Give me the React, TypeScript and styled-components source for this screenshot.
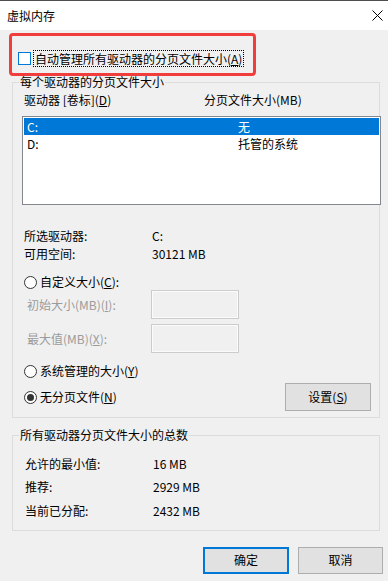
import styled, { createGlobalStyle } from "styled-components";

const GlobalStyle = createGlobalStyle`
  html, body {
    margin: 0;
    padding: 0;
    background: #f0f0f0;
  }
  body {
    font-family: "Noto Sans CJK SC", "Microsoft YaHei", sans-serif;
    font-size: 12px;
    color: #000;
  }
`;

const Window = styled.div`
  width: 388px;
  height: 581px;
  background: #f0f0f0;
  display: flex;
  flex-direction: column;
  overflow: hidden;
`;

const TitleBar = styled.div`
  height: 29px;
  border-top: 1px solid #4d4d4d;
  background: #fff;
  display: flex;
  align-items: center;
  justify-content: space-between;
  padding: 0 5px 0 7px;
  flex-shrink: 0;
`;

const Title = styled.span`
  font-size: 12px;
  line-height: 16px;
`;

/* red annotation frame around the auto-manage checkbox */
const Highlight = styled.div`
  box-sizing: border-box;
  margin: 3px 0 0 9px;
  width: 247px;
  height: 43px;
  border: 3px solid #f23d3d;
  border-radius: 4px;
  padding: 14px 0 0 6px;
`;

const CheckRow = styled.div`
  display: flex;
  align-items: center;
  height: 17px;
`;

const CheckBox = styled.span`
  box-sizing: border-box;
  width: 13px;
  height: 13px;
  border: 1px solid #0078d7;
  background: #fff;
  margin-right: 2px;
`;

const FocusLabel = styled.span`
  box-sizing: border-box;
  height: 17px;
  line-height: 15px;
  border: 1px dotted #000;
  padding: 0 1px;
`;

const Group = styled.fieldset<{ $top: number }>`
  margin: ${(p) => p.$top}px 8px 0 12px;
  padding: 0 0 ${(p) => (p.$top < 0 ? 6 : 7)}px 0;
  border: 1px solid #dcdcdc;
  min-width: 0;
`;

const Legend = styled.legend`
  margin-left: 6px;
  padding: 0 1px;
  line-height: 16px;
`;

const ColumnHeader = styled.div`
  display: grid;
  grid-template-columns: 180px 1fr;
  margin-top: 2px;
  padding-left: 11px;
  line-height: 16px;
`;

const ListBox = styled.div`
  box-sizing: border-box;
  margin: 8px 0 0 9px;
  width: 359px;
  height: 89px;
  border: 1px solid #828790;
  background: #fff;
  padding: 1px;
`;

const ListRow = styled.div<{ $selected?: boolean }>`
  display: grid;
  grid-template-columns: 211px 1fr;
  height: 17px;
  line-height: 17px;
  padding-left: 3px;
  background: ${(p) => (p.$selected ? "#0078d7" : "transparent")};
  color: ${(p) => (p.$selected ? "#fff" : "#000")};
`;

const InfoBlock = styled.div<{ $top: number; $row: number }>`
  margin-top: ${(p) => p.$top}px;
  display: grid;
  grid-auto-rows: ${(p) => p.$row}px;
  align-items: center;
`;

const InfoRow = styled.div<{ $pad: number }>`
  display: grid;
  grid-template-columns: 128px 1fr;
  padding-left: ${(p) => p.$pad}px;
  line-height: 16px;
`;

const RadioRow = styled.label<{ $top: number }>`
  display: flex;
  align-items: center;
  height: 16px;
  margin-top: ${(p) => p.$top}px;
  padding-left: 11px;
  gap: 3px;
  line-height: 16px;
`;

const Radio = styled.span<{ $checked?: boolean }>`
  box-sizing: border-box;
  width: 13px;
  height: 13px;
  border-radius: 50%;
  border: 1px solid #333;
  background: #fff;
  display: flex;
  align-items: center;
  justify-content: center;
  &::after {
    content: "";
    width: 7px;
    height: 7px;
    border-radius: 50%;
    background: ${(p) => (p.$checked ? "#333" : "transparent")};
  }
`;

const SizeGrid = styled.div`
  display: grid;
  grid-auto-rows: 29px;
  row-gap: 5px;
`;

const SizeRow = styled.div`
  display: grid;
  grid-template-columns: 124px 88px;
  padding-left: 14px;
  align-items: center;
  color: #9b9b9b;
  line-height: 16px;
`;

const DisabledInput = styled.div`
  box-sizing: border-box;
  height: 29px;
  border: 1px solid #cccccc;
  box-shadow: inset 0 0 0 1px #fbfbfb;
  background: #f0f0f0;
`;

const BottomRow = styled.div`
  display: flex;
  align-items: center;
  justify-content: space-between;
  margin-top: 4px;
  height: 28px;
  padding-right: 8px;
  & > label {
    margin-top: 0;
  }
`;

const Button = styled.button<{ $default?: boolean; $w: number; $h: number }>`
  box-sizing: border-box;
  width: ${(p) => p.$w}px;
  height: ${(p) => p.$h}px;
  background: #e1e1e1;
  border: ${(p) => (p.$default ? "2px solid #0078d7" : "1px solid #adadad")};
  font-family: inherit;
  font-size: 12px;
  color: #000;
  padding: 0;
  line-height: 16px;
`;

const Footer = styled.div`
  display: flex;
  justify-content: flex-end;
  gap: 9px;
  margin-top: 16px;
  padding-right: 5px;
`;

const CloseIcon = () => (
  <svg width="11" height="11" viewBox="0 0 11 11">
    <path d="M0.5 0.5 L10.5 10.5 M10.5 0.5 L0.5 10.5" stroke="#000" strokeWidth="1" />
  </svg>
);

const drives = [
  { name: "C:", size: "无", selected: true },
  { name: "D:", size: "托管的系统", selected: false },
];

const totals = [
  { label: "允许的最小值:", value: "16 MB" },
  { label: "推荐:", value: "2929 MB" },
  { label: "当前已分配:", value: "2432 MB" },
];

export default function App() {
  return (
    <Window>
      <GlobalStyle />
      <TitleBar>
        <Title>虚拟内存</Title>
        <CloseIcon />
      </TitleBar>

      <Highlight>
        <CheckRow>
          <CheckBox />
          <FocusLabel>
            自动管理所有驱动器的分页文件大小(<u>A</u>)
          </FocusLabel>
        </CheckRow>
      </Highlight>

      <Group $top={-2}>
        <Legend>每个驱动器的分页文件大小</Legend>
        <ColumnHeader>
          <span>
            驱动器 [卷标](<u>D</u>)
          </span>
          <span>分页文件大小(MB)</span>
        </ColumnHeader>
        <ListBox>
          {drives.map((d) => (
            <ListRow key={d.name} $selected={d.selected}>
              <span>{d.name}</span>
              <span>{d.size}</span>
            </ListRow>
          ))}
        </ListBox>

        <InfoBlock $top={22} $row={18}>
          <InfoRow $pad={11}>
            <span>所选驱动器:</span>
            <span>C:</span>
          </InfoRow>
          <InfoRow $pad={11}>
            <span>可用空间:</span>
            <span>30121 MB</span>
          </InfoRow>
        </InfoBlock>

        <RadioRow $top={11}>
          <Radio />
          <span>
            自定义大小(<u>C</u>):
          </span>
        </RadioRow>
        <SizeGrid>
          <SizeRow>
            <span>
              初始大小(MB)(<u>I</u>):
            </span>
            <DisabledInput />
          </SizeRow>
          <SizeRow>
            <span>
              最大值(MB)(<u>X</u>):
            </span>
            <DisabledInput />
          </SizeRow>
        </SizeGrid>

        <RadioRow $top={10}>
          <Radio />
          <span>
            系统管理的大小(<u>Y</u>)
          </span>
        </RadioRow>
        <BottomRow>
          <RadioRow $top={0}>
            <Radio $checked />
            <span>
              无分页文件(<u>N</u>)
            </span>
          </RadioRow>
          <Button $w={86} $h={28}>
            设置(<u>S</u>)
          </Button>
        </BottomRow>
      </Group>

      <Group $top={9}>
        <Legend>所有驱动器分页文件大小的总数</Legend>
        <InfoBlock $top={9} $row={23.5}>
          {totals.map((t) => (
            <InfoRow key={t.label} $pad={12}>
              <span>{t.label}</span>
              <span>{t.value}</span>
            </InfoRow>
          ))}
        </InfoBlock>
      </Group>

      <Footer>
        <Button $default $w={86} $h={27}>
          确定
        </Button>
        <Button $w={85} $h={27}>
          取消
        </Button>
      </Footer>
    </Window>
  );
}
